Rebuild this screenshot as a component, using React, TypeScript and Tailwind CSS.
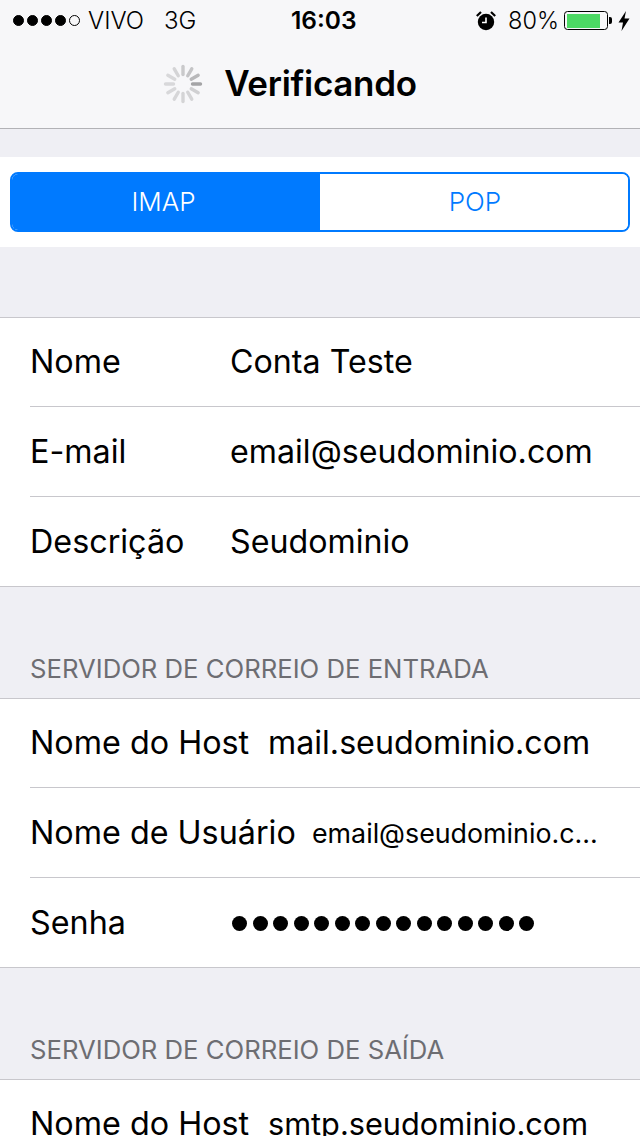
const font = { fontFamily: '"Inter", "Liberation Sans", sans-serif' };

function Spinner() {
  const bars = [
    [0, "#c9c9cb"], [30, "#c4c4c6"], [60, "#b8b8ba"], [90, "#a4a4a6"], [120, "#d0d0d2"], [150, "#d4d4d6"],
    [180, "#d4d4d6"], [210, "#d6d6d8"], [240, "#d8d8da"], [270, "#d8d8da"], [300, "#d8d8da"], [330, "#d4d4d6"],
  ] as const;
  return (
    <svg width="40" height="40" viewBox="0 0 40 40" className="shrink-0 mt-[2px]">
      {bars.map(([a, c]) => (
        <line key={a} x1="20" y1="2.5" x2="20" y2="10.5" stroke={c} strokeWidth="3.4" strokeLinecap="round" transform={`rotate(${a} 20 20)`} />
      ))}
    </svg>
  );
}

function Row({ label, value, valueClass = "text-[32.2px]", last = false, labelW = "w-[200px]", height = "h-[89px]", nudge = "" }: { label: string; value: React.ReactNode; valueClass?: string; last?: boolean; labelW?: string; height?: string; nudge?: string }) {
  return (
    <div className="pl-[30px]">
      <div className={`flex items-center ${height} ${nudge} ${last ? "" : "border-b border-[#c8c7cc]"}`}>
        <div className={`${labelW} shrink-0 text-[32.3px] text-black whitespace-nowrap`}>{label}</div>
        <div className={`text-black whitespace-nowrap ${valueClass}`}>{value}</div>
      </div>
    </div>
  );
}

function Section({ children, className = "" }: { children: React.ReactNode; className?: string }) {
  return <div className={`bg-white border-y border-[#c8c7cc] ${className}`}>{children}</div>;
}

function Caption({ children }: { children: React.ReactNode }) {
  return <div className="h-[111px] flex items-end pl-[30px] pb-[14px] text-[25.7px] leading-[30px] text-[#6d6d72]">{children}</div>;
}

export default function App() {
  return (
    <div style={font} className="w-[640px] h-[1136px] overflow-hidden bg-[#efeff4] antialiased">
      <header className="h-[129px] bg-[#f7f7f9] border-b border-[#b2b2b6] flex flex-col">
        <div className="h-[41px] flex items-center pl-[13px] pr-[10px] text-black">
          <div className="flex items-center w-[278px]">
            <div className="flex items-center gap-[3px]">
              {[0, 1, 2, 3, 4].map((i) => (
                <span key={i} className={`w-[11px] h-[11px] rounded-full border border-black ${i < 4 ? "bg-black" : ""}`} />
              ))}
            </div>
            <span className="ml-[8px] text-[24px] font-light">VIVO</span>
            <span className="ml-[20px] text-[24px] font-light">3G</span>
          </div>
          <div className="font-semibold text-[24.5px]">16:03</div>
          <div className="flex items-center justify-end ml-auto">
            <svg width="20" height="20" viewBox="0 0 20 20" className="mr-[12px]">
              <circle cx="10" cy="11" r="8.2" fill="#000" />
              <path d="M10 6.5v5H6" stroke="#fff" strokeWidth="1.6" fill="none" />
              <path d="M0.8 5 L5 1 M19.2 5 L15 1" stroke="#000" strokeWidth="2.2" />
            </svg>
            <span className="font-light text-[23.5px]">80%</span>
            <div className="ml-[5px] w-[44px] h-[19px] rounded-[3.5px] border border-black p-[1.5px] flex">
              <div className="w-[33px] bg-[#4cd964]" />
            </div>
            <div className="w-[3px] h-[7px] bg-black rounded-r-[2px] ml-px" />
            <svg width="12" height="20" viewBox="0 0 12 20" className="ml-[6px]">
              <path d="M8 0 L0.5 11.5 H5 L3.5 20 L11.5 7.5 H6.5 Z" fill="#000" />
            </svg>
          </div>
        </div>
        <div className="flex-1 flex items-center justify-center pb-[3px] pr-[60px]">
          <div className="flex items-center gap-[21px]">
            <Spinner />
            <span className="text-[35px] font-semibold text-black tracking-[-0.3px]">Verificando</span>
          </div>
        </div>
      </header>

      <div className="mt-[28px] h-[90px] bg-white px-[10px] flex items-center">
        <div className="w-full h-[60px] flex rounded-[8px] border-2 border-[#007aff] overflow-hidden text-[26px]">
          <div className="w-[308px] bg-[#007aff] text-white flex items-center justify-center font-light pr-[5px] pb-[2px]">IMAP</div>
          <div className="flex-1 bg-white text-[#007aff] flex items-center justify-center font-light pl-[2px] pb-[2px]">POP</div>
        </div>
      </div>

      <Section className="mt-[70px]">
        <Row label="Nome" value="Conta Teste" />
        <Row label="E-mail" value="email@seudominio.com" height="h-[90px]" nudge="pt-[2px]" />
        <Row label="Descrição" value="Seudominio" last nudge="pt-[2px]" />
      </Section>

      <Caption>SERVIDOR DE CORREIO DE ENTRADA</Caption>
      <Section>
        <Row label="Nome do Host" value="mail.seudominio.com" labelW="w-[238px]" />
        <Row label="Nome de Usuário" value="email@seudominio.c..." labelW="w-[282px]" valueClass="text-[26.8px]" height="h-[90px]" nudge="pt-[2px]" />
        <Row
          label="Senha"
          value={
            <div className="flex gap-[5.5px] ml-[2px]">
              {Array.from({ length: 15 }).map((_, i) => (
                <span key={i} className="w-[15px] h-[15px] rounded-full bg-black" />
              ))}
            </div>
          }
          last
          nudge="pt-[2px]"
        />
      </Section>

      <Caption>SERVIDOR DE CORREIO DE SAÍDA</Caption>
      <Section>
        <Row label="Nome do Host" value="smtp.seudominio.com" labelW="w-[238px]" valueClass="text-[30.7px]" />
      </Section>
    </div>
  );
}
